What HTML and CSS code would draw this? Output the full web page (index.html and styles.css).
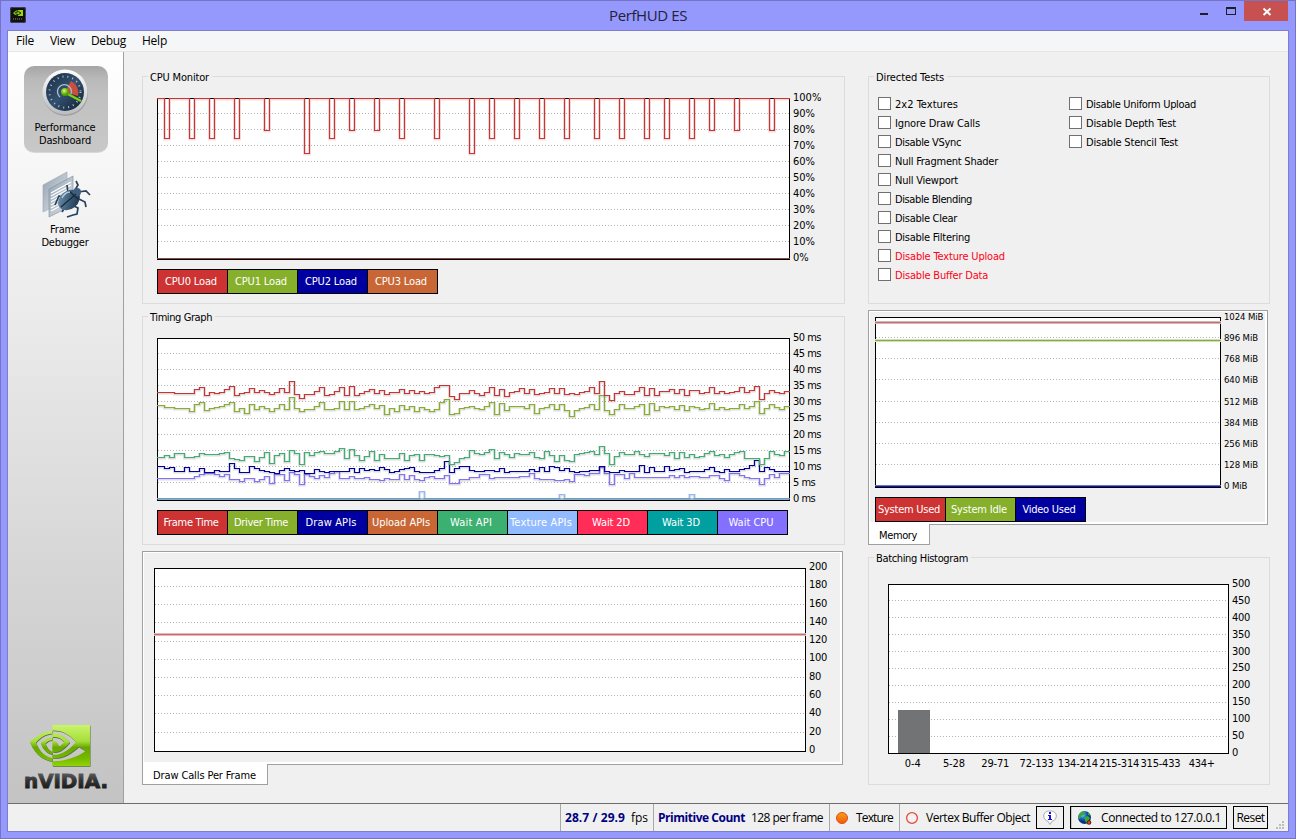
FILE: index.html
```html
<!DOCTYPE html>
<html lang="en">
<head>
<meta charset="utf-8">
<title>PerfHUD ES</title>
<link rel="stylesheet" href="styles.css">
</head>
<body>
<div class="window">
  <header class="titlebar">
    <svg class="app-icon" width="16" height="16" viewBox="0 0 16 16"><rect width="16" height="16" rx="2" fill="#111"/><rect x=".5" y=".5" width="15" height="15" rx="2" fill="none" stroke="#444"/><path d="M3 6q4-4 5-2v4q-3 1-5-2z" fill="#79b50d"/><path d="M8 3h5v6H8z" fill="#9bd11c"/><path d="M5 6q3-3 6 0-3 3-5 1" fill="none" stroke="#173400"/><path d="M3 12h10" stroke="#888" stroke-dasharray="1 1"/></svg>
    <h1 class="title" data-w="78">PerfHUD ES</h1>
    <div class="controls">
      <svg width="88" height="20" viewBox="0 1 88 20"><path d="M0 13h8v2H0z" fill="#1e1e28"/><path d="M26 7h10v8H26zM27 9v5h8V9z" fill="#1e1e28" fill-rule="evenodd"/><path d="M44 1h44v20H44z" fill="#c75050"/><path d="M63.500 8.500l7 6.500m0-6.500l-7 6.500" stroke="#fff" stroke-width="1.900"/></svg>
    </div>
  </header>
  <div class="client">
    <nav class="menu"><span data-w="18">File</span><span data-w="25">View</span><span data-w="35">Debug</span><span data-w="25">Help</span></nav>
    <div class="middle">
      <aside class="sidebar">
        <div class="tile tile-active">
          <svg class="tile-icon" width="50" height="50" viewBox="0 0 50 50">
            <defs>
              <linearGradient id="rim" x2="0" y2="1"><stop stop-color="#fff"/><stop offset="1" stop-color="#b9bcc0"/></linearGradient>
              <linearGradient id="dial" x2="1" y2="1"><stop stop-color="#1b2c42"/><stop offset=".5" stop-color="#33506f"/><stop offset="1" stop-color="#101e30"/></linearGradient>
              <radialGradient id="hub" cx=".4" cy=".35"><stop stop-color="#d7ff70"/><stop offset="1" stop-color="#4fa000"/></radialGradient>
            </defs>
            <circle cx="25.500" cy="26.500" r="22.500" fill="#777" opacity=".45"/>
            <circle cx="25" cy="25" r="22.500" fill="url(#rim)"/>
            <circle cx="25" cy="25" r="19" fill="url(#dial)"/>
            <path d="M25 25L31 14a13 13 0 0 1 7 15z" fill="#c9503e"/>
            <circle cx="25" cy="25" r="15.500" fill="none" stroke="#dbe4ee" stroke-width="2" stroke-dasharray="1 4" opacity=".8"/>
            <path d="M20 30a7 7 0 1 1 11-3" fill="none" stroke="#aebccd" stroke-width="1.300"/>
            <path d="M24 25L41 34" stroke="#77d60c" stroke-width="2.400"/>
            <circle cx="25" cy="25" r="4" fill="url(#hub)"/>
          </svg>
          <span data-w="61">Performance</span><span data-w="52">Dashboard</span>
        </div>
        <div class="tile">
          <svg class="tile-icon" width="50" height="50" viewBox="0 0 50 50">
            <defs><linearGradient id="page" x2="1" y2="1"><stop stop-color="#8fa0b0"/><stop offset="1" stop-color="#e5e9ed"/></linearGradient>
            <linearGradient id="bug" x2="1" y2="1"><stop stop-color="#7899b6"/><stop offset=".6" stop-color="#35536f"/><stop offset="1" stop-color="#182b40"/></linearGradient></defs>
            <path d="M2 14L26 1v28L2 41z" fill="url(#page)" stroke="#9aa5af" stroke-width=".6"/>
            <path d="M8 18L32 5v29L8 46z" fill="url(#page)" stroke="#7d8c9a" stroke-width=".6"/>
            <path d="M10 22l20-11M10 25l20-11M10 28l18-10M10 31l16-9M10 34l15-8M10 37l13-7M10 40l13-7" stroke="#fff" stroke-width="1.300"/>
            <path d="M23 27l-5-2-4 9M27 22l-1-8M34 19l3-5-2-4M37 21l8-1 4 4M38 28l6 3 1 5M33 35l4 2-1 6-4 1-6 2M24 36l-3 5" fill="none" stroke="#29415a" stroke-width="1.700"/>
            <ellipse cx="28" cy="29" rx="12" ry="9" transform="rotate(-40 28 29)" fill="url(#bug)"/>
            <circle cx="36" cy="21" r="4" fill="#3f5f7d"/>
            <path d="M20 36L35 23M28 20l9 8" stroke="#14273a" stroke-width="1.100"/>
            <path d="M21 27q3-6 8-6" fill="none" stroke="#b5cadd" stroke-width="1.300"/>
          </svg>
          <span data-w="30">Frame</span><span data-w="47">Debugger</span>
        </div>
        <svg class="brand" width="90" height="70" viewBox="0 0 90 70">
          <defs>
            <linearGradient id="eye" x2="0" y2="1"><stop stop-color="#c9f56b"/><stop offset=".4" stop-color="#a6dd3a"/><stop offset=".55" stop-color="#67a800"/><stop offset=".8" stop-color="#74b800"/><stop offset="1" stop-color="#8fd400"/></linearGradient>
            <linearGradient id="word" x2="0" y2="1"><stop stop-color="#777"/><stop offset=".5" stop-color="#333"/><stop offset="1" stop-color="#111"/></linearGradient>
          </defs>
          <g transform="translate(7 -7.500) scale(2.500 2.580)">
            <path transform="translate(.2 .3)" fill="#31530a" opacity=".75" d="M8.948 8.798v-1.430a6.700 6.700 0 0 1 .424-.018c3.922-.124 6.493 3.374 6.493 3.374s-2.774 3.851-5.750 3.851c-.398 0-.787-.062-1.158-.185v-4.346c1.528.185 1.837.857 2.747 2.385l2.040-1.714s-1.492-1.952-4-1.952a6.016 6.016 0 0 0-.796.035m0-4.735v2.138l.424-.027c5.450-.185 9.010 4.470 9.010 4.470s-4.080 4.964-8.330 4.964c-.370 0-.733-.035-1.095-.097v1.325c.3.035.610.062.910.062 3.957 0 6.820-2.023 9.593-4.408.459.371 2.340 1.263 2.730 1.652-2.633 2.208-8.772 3.984-12.253 3.984-.335 0-.653-.018-.971-.053v1.864H24V4.063zm0 10.326v1.131c-3.657-.654-4.673-4.460-4.673-4.460s1.758-1.944 4.673-2.262v1.237H8.940c-1.528-.186-2.730 1.245-2.730 1.245s.680 2.412 2.739 3.110M2.456 10.900s2.164-3.197 6.500-3.533V6.201C4.153 6.590 0 10.653 0 10.653s2.350 6.802 8.948 7.420v-1.237c-4.840-.6-6.492-5.936-6.492-5.936z"/>
            <path fill="url(#eye)" d="M8.948 8.798v-1.430a6.700 6.700 0 0 1 .424-.018c3.922-.124 6.493 3.374 6.493 3.374s-2.774 3.851-5.750 3.851c-.398 0-.787-.062-1.158-.185v-4.346c1.528.185 1.837.857 2.747 2.385l2.040-1.714s-1.492-1.952-4-1.952a6.016 6.016 0 0 0-.796.035m0-4.735v2.138l.424-.027c5.450-.185 9.010 4.470 9.010 4.470s-4.080 4.964-8.330 4.964c-.370 0-.733-.035-1.095-.097v1.325c.3.035.610.062.910.062 3.957 0 6.820-2.023 9.593-4.408.459.371 2.340 1.263 2.730 1.652-2.633 2.208-8.772 3.984-12.253 3.984-.335 0-.653-.018-.971-.053v1.864H24V4.063zm0 10.326v1.131c-3.657-.654-4.673-4.460-4.673-4.460s1.758-1.944 4.673-2.262v1.237H8.940c-1.528-.186-2.730 1.245-2.730 1.245s.680 2.412 2.739 3.110M2.456 10.900s2.164-3.197 6.500-3.533V6.201C4.153 6.590 0 10.653 0 10.653s2.350 6.802 8.948 7.420v-1.237c-4.840-.6-6.492-5.936-6.492-5.936z"/>
          </g>
          <text class="wordmark" x="1" y="65.500" textLength="84" lengthAdjust="spacingAndGlyphs" fill="url(#word)">nVIDIA.</text>
        </svg>
      </aside>
      <main class="content">
        <section class="column">
          <div class="group cpu">
            <h2 class="group-title" data-w="59">CPU Monitor</h2>
            <div class="chart"><svg class="plot" id="cpu" width="633" height="162"></svg><div class="axis" data-labels="100%,90%,80%,70%,60%,50%,40%,30%,20%,10%,0%"></div></div>
            <div class="legend"><b class="key red"><span data-w="52">CPU0 Load</span></b><b class="key green"><span data-w="52">CPU1 Load</span></b><b class="key navy"><span data-w="52">CPU2 Load</span></b><b class="key orange"><span data-w="52">CPU3 Load</span></b></div>
          </div>
          <div class="group timing">
            <h2 class="group-title" data-w="62">Timing Graph</h2>
            <div class="chart"><svg class="plot" id="timing" width="633" height="163"></svg><div class="axis" data-labels="50 ms,45 ms,40 ms,35 ms,30 ms,25 ms,20 ms,15 ms,10 ms,5 ms,0 ms"></div></div>
            <div class="legend"><b class="key red"><span data-w="55">Frame Time</span></b><b class="key green"><span data-w="54">Driver Time</span></b><b class="key navy"><span data-w="51">Draw APIs</span></b><b class="key orange"><span data-w="58">Upload APIs</span></b><b class="key jade"><span data-w="42">Wait API</span></b><b class="key sky"><span data-w="62">Texture APIs</span></b><b class="key crimson"><span data-w="38">Wait 2D</span></b><b class="key teal"><span data-w="38">Wait 3D</span></b><b class="key violet"><span data-w="45">Wait CPU</span></b></div>
          </div>
          <div class="panel calls">
            <div class="chart"><svg class="plot" id="calls" width="652" height="184"></svg><div class="axis" data-labels="200,180,160,140,120,100,80,60,40,20,0"></div></div>
          </div>
          <div class="tab calls-tab"><span data-w="103">Draw Calls Per Frame</span></div>
        </section>
        <section class="column">
          <div class="group tests">
            <h2 class="group-title" data-w="68">Directed Tests</h2>
            <div class="checks">
              <label><i></i><span data-w="63">2x2 Textures</span></label>
              <label><i></i><span data-w="85">Ignore Draw Calls</span></label>
              <label><i></i><span data-w="66">Disable VSync</span></label>
              <label><i></i><span data-w="103">Null Fragment Shader</span></label>
              <label><i></i><span data-w="63">Null Viewport</span></label>
              <label><i></i><span data-w="77">Disable Blending</span></label>
              <label><i></i><span data-w="62">Disable Clear</span></label>
              <label><i></i><span data-w="75">Disable Filtering</span></label>
              <label class="warn"><i></i><span data-w="110">Disable Texture Upload</span></label>
              <label class="warn"><i></i><span data-w="93">Disable Buffer Data</span></label>
            </div>
            <div class="checks">
              <label><i></i><span data-w="110">Disable Uniform Upload</span></label>
              <label><i></i><span data-w="90">Disable Depth Test</span></label>
              <label><i></i><span data-w="92">Disable Stencil Test</span></label>
            </div>
          </div>
          <div class="panel memory">
            <div class="chart"><svg class="plot" id="memory" width="346" height="171"></svg><div class="axis" data-labels="1024 MiB,896 MiB,768 MiB,640 MiB,512 MiB,384 MiB,256 MiB,128 MiB,0 MiB"></div></div>
            <div class="legend"><b class="key red"><span data-w="62">System Used</span></b><b class="key green"><span data-w="56">System Idle</span></b><b class="key navy"><span data-w="53">Video Used</span></b></div>
          </div>
          <div class="tab memory-tab"><span data-w="38">Memory</span></div>
          <div class="group histogram">
            <h2 class="group-title" data-w="92">Batching Histogram</h2>
            <div class="chart"><svg class="plot" id="histogram" width="341" height="170"></svg><div class="axis" data-labels="500,450,400,350,300,250,200,150,100,50,0"></div></div>
            <div class="buckets"><span data-w="16">0-4</span><span data-w="22">5-28</span><span data-w="28">29-71</span><span data-w="34">72-133</span><span data-w="40">134-214</span><span data-w="40">215-314</span><span data-w="40">315-433</span><span data-w="26">434+</span></div>
          </div>
        </section>
      </main>
    </div>
    <footer class="status">
      <div class="cell fps"><strong data-w="60">28.7 / 29.9</strong><span data-w="17">fps</span></div>
      <div class="cell prims"><strong data-w="87">Primitive Count</strong><span data-w="72">128 per frame</span></div>
      <div class="cell texture"><svg width="14" height="14"><defs><linearGradient id="dot" x2="0" y2="1"><stop stop-color="#f8a010"/><stop offset="1" stop-color="#f05a10"/></linearGradient></defs><circle cx="7" cy="7" r="5.500" fill="url(#dot)" stroke="#e24a1c"/></svg><span data-w="37">Texture</span></div>
      <div class="cell vbo"><svg width="14" height="14"><circle cx="7" cy="7" r="5.400" fill="#f4f2f2" stroke="#e5483a" stroke-width="1.300"/></svg><span data-w="104">Vertex Buffer Object</span></div>
      <div class="button info"><svg width="16" height="16" viewBox="0 0 16 16"><path d="M8 1c4.300 0 6.300 2.200 6.300 5s-2 4.700-4.300 5.300L8 14.500l-2-3.200C3.700 10.700 1.700 8.800 1.700 6S3.700 1 8 1z" fill="#fff" stroke="#aaa"/><path d="M7 2h2v2H7zM6 5h3v4h1v1H6V9h1V6H6z" fill="#1414e0"/></svg></div>
      <div class="divider"></div>
      <div class="button connection"><svg width="16" height="16" viewBox="0 0 16 16"><defs><radialGradient id="globe" cx=".35" cy=".3"><stop stop-color="#8fd4ff"/><stop offset=".5" stop-color="#2070d0"/><stop offset="1" stop-color="#0a2f80"/></radialGradient></defs><circle cx="7.500" cy="7.500" r="6.500" fill="url(#globe)"/><path d="M3 3q3-3 6-1l-2 3-3 1-1 3-2-1zM7 7l4-1 2 2-3 5-2-2zM11 2l3 4-3-1z" fill="#38a838"/><circle cx="12" cy="12.500" r="2.300" fill="#602010"/><circle cx="12" cy="12.500" r="1.200" fill="#f04020"/></svg><span data-w="120">Connected to 127.0.0.1</span></div>
      <div class="button reset"><span data-w="28">Reset</span></div>
      <svg class="grip" width="9" height="9"><path d="M6 0h2v2H6zM3 3h2v2H3zM6 3h2v2H6zM0 6h2v2H0zM3 6h2v2H3zM6 6h2v2H6z" fill="#bdbdbd"/></svg>
    </footer>
  </div>
</div>
<script src="app.js"></script>
</body>
</html>
```
FILE: styles.css
```css
* { box-sizing: border-box; }
body { margin: 0; width: 1296px; height: 839px; overflow: hidden; font: 11px/12px "DejaVu Sans Condensed", "DejaVu Sans", sans-serif; color: #000; }
h1, h2 { margin: 0; font-weight: normal; }
span, strong, h1, h2 { white-space: nowrap; }
svg { display: block; flex: none; }
.window { width: 1296px; height: 839px; background: #9598fc; border: 1px solid #7474c2; padding: 0 6px 6px; display: flex; flex-direction: column; }
.titlebar { height: 29px; flex: none; display: grid; grid-template-columns: 1fr auto 1fr; align-items: start; }
.app-icon { margin: 6px 0 0 3px; }
.title { font: 15px/20px "Open Sans", "Noto Sans", sans-serif; color: #22223a; margin-top: 4px; }
.controls { justify-self: end; margin-right: 1px; }
.client { flex: 1; border: 1px solid #7f7fc9; background: #f0f0f0; display: flex; flex-direction: column; min-height: 0; }
.menu { height: 21px; flex: none; display: flex; gap: 16px; padding-left: 8px; background: #f5f6f7; border-bottom: 1px solid #e4e6e8; font: 12px/20px "Open Sans", "Noto Sans", sans-serif; }
.middle { flex: 1; display: flex; min-height: 0; }
.sidebar { width: 116px; flex: none; border-right: 1px solid #a0a0a0; background: linear-gradient(#fff, #f1f1f1 25%, #c3c3c3); display: flex; flex-direction: column; align-items: center; padding: 14px 1px 11px 1px; }
.tile { width: 84px; height: 87px; display: flex; flex-direction: column; align-items: center; margin-bottom: 15px; line-height: 13px; }
.tile + .tile { padding-top: 3px; }
.tile-active { border-radius: 10px; background: linear-gradient(#a6a6a6, #b9b9b9 15%, #c1c1c1 35%, #c8c8c8); border-bottom: 1px solid #d8d8d8; }
.tile-icon { margin: 1px 2px 4px 0; }
.tile span { margin-right: 1px; }
.tile + .tile .tile-icon { margin: 0 0 2px; }
.brand { margin: auto 0 0 4px; }
.wordmark { font: bold 20px "DejaVu Sans", sans-serif; stroke: url(#word); stroke-width: 1px; }
.content { display: flex; gap: 23px; padding: 24px 0 0 18px; }
.column:first-child { width: 703px; }
.column:last-child { width: 402px; }
.group { position: relative; border: 1px solid #dcdcdc; }
.group-title { position: absolute; left: 5px; top: -7px; height: 14px; padding: 0 3px 0 2px; font-size: 11px; line-height: 16px; background: #f0f0f0; }
.chart { display: flex; }
.axis { margin-left: 3px; display: flex; flex-direction: column; justify-content: space-between; letter-spacing: -.3px; white-space: nowrap; }
.axis span { height: 12px; line-height: 14px; }
.cpu { height: 228px; padding: 14px 0 0 14px; }
.cpu .chart { height: 172px; }
.cpu .axis { letter-spacing: 0; }
.cpu .plot, .timing .plot { margin-top: 7px; }
.timing { height: 229px; margin-top: 12px; padding: 14px 0 0 14px; }
.timing .chart { height: 173px; }
.timing .axis { letter-spacing: -.5px; }
.legend { display: flex; margin-top: 6px; }
.key { width: 71px; height: 25px; border: 1px solid #000; display: flex; justify-content: center; align-items: center; color: #fff; font-weight: normal; padding-right: 3px; }
.key + .key { margin-left: -1px; }
.red { background: #cd3333; }
.green { background: #86b02b; }
.navy { background: #0000a0; }
.orange { background: #c86735; }
.jade { background: #3cb070; }
.sky { background: #92baff; }
.crimson { background: #ff2d58; }
.teal { background: #00a0a0; }
.violet { background: #8470ff; }
.panel { border: 1px solid #a0a0a0; box-shadow: inset 1px 1px #fff, inset -2px -2px #fff; }
.calls { width: 701px; height: 214px; margin-top: 6px; padding: 8px 0 0 11px; }
.calls .chart { height: 195px; }
.calls .plot { margin-top: 8px; }
.tab { position: relative; height: 21px; margin-top: -1px; background: #fff; border: 1px solid #a0a0a0; border-top: 0; padding: 6px 0 0 10px; }
.calls-tab { width: 126px; }
.memory-tab { width: 62px; }
.tests { height: 228px; padding: 17px 0 0 9px; display: flex; }
.checks { width: 191px; }
.checks label { display: flex; align-items: center; height: 19px; }
.checks i { width: 13px; height: 13px; border: 1px solid #707070; background: #fff; margin-right: 4px; }
.checks span { padding-top: 2px; }
.warn { color: #ff0014; }
.memory { width: 400px; height: 215px; margin-top: 6px; padding: 0 0 0 6px; }
.memory .chart { height: 181px; }
.memory .plot { margin-top: 6px; }
.memory .axis { font-size: 9.500px; letter-spacing: -.1px; }
.memory .axis span { line-height: 12px; }
.memory .legend { margin-top: 5px; }
.histogram { height: 228px; margin-top: 12px; padding: 19px 0 0 19px; }
.histogram .chart { height: 181px; }
.histogram .plot { margin-top: 7px; }
.buckets { display: grid; grid-template-columns: repeat(8, 41.300px); justify-items: center; margin: 0 0 0 4px; }
.status { height: 28px; flex: none; border-top: 1px solid #6d6d6d; display: flex; justify-content: flex-end; font: 12px/16px "Open Sans", "Noto Sans", sans-serif; }
.status strong { color: #000080; }
.cell { border-left: 1px solid #a8a8a8; display: flex; align-items: center; }
.fps { width: 93px; padding-left: 4px; gap: 6px; }
.prims { width: 176px; padding-left: 4px; gap: 6px; }
.texture { width: 70px; padding-left: 5px; gap: 7px; }
.vbo { width: 137px; padding-left: 5px; gap: 7px; }
.button { height: 23px; margin-top: 2px; border: 1px solid #000; display: flex; align-items: center; }
.info { width: 28px; justify-content: center; }
.divider { width: 6px; }
.connection { width: 157px; padding-left: 6px; gap: 8px; background: linear-gradient(90deg, #c8c8c8 1px, transparent 1px); }
.reset { width: 35px; margin-left: 6px; justify-content: center; }
.grip { margin: 17px 3px 0 8px; }
```
FILE: app.js
```js
const NS = 'http://www.w3.org/2000/svg';

function add(svg, tag, attrs) {
  const el = document.createElementNS(NS, tag);
  for (const k in attrs) el.setAttribute(k, attrs[k]);
  svg.appendChild(el);
}

// White plot area with dotted horizontal rules at the given rows.
function base(id, rows) {
  const svg = document.getElementById(id);
  const w = +svg.getAttribute('width'), h = +svg.getAttribute('height');
  add(svg, 'rect', { x: .5, y: .5, width: w - 1, height: h - 1, fill: '#fff', stroke: '#000' });
  for (const r of rows) {
    add(svg, 'path', { d: `M1 ${r + .5}H${w - 1}`, stroke: '#b4b4b4', 'stroke-dasharray': '1 2', 'shape-rendering': 'crispEdges' });
  }
  return svg;
}

// Step line with a soft shadow under it.
function steps(svg, points, color, shadow = '#555') {
  const w = +svg.getAttribute('width');
  let d = `M0 ${points[0][1]}`;
  for (const [x, y] of points.slice(1)) d += `H${x}V${y}`;
  d += `H${w}`;
  add(svg, 'path', { d, fill: 'none', stroke: shadow, 'stroke-opacity': .2, 'stroke-width': 2.6, transform: 'translate(0 .7)' });
  add(svg, 'path', { d, fill: 'none', stroke: color, 'stroke-width': 1.15 });
}

// Series are stored as "x:y" at a third of a pixel, in two halves 1050 units apart.
function decode(first, second) {
  const read = (s, off) => s.trim().split(/\s+/).map(p => {
    const [x, y] = p.split(':').map(Number);
    return [Math.floor((x + off) / 3) - 17 + .5, Math.floor(y / 3) - 33 + .5];
  });
  return read(first, 0).concat(read(second, 1050));
}

const every = (start, step, n) => Array.from({ length: n }, (_, i) => Math.round(start + i * step));

// CPU load
const cpu = base('cpu', every(15, 16, 9));
const dips = { 1: 40, 6: 40, 10: 40, 15: 40, 21: 32, 29: 55, 34: 40, 38: 32, 43: 32, 48: 40, 55: 40, 62: 55, 66: 40,
  71: 40, 76: 40, 81: 40, 87: 40, 92: 40, 97: 40, 101: 40, 106: 40, 110: 32, 115: 32, 122: 32 };
const load = [[0, .5]];
for (const k in dips) load.push([2.5 + 5 * k, dips[k] + .5], [7.5 + 5 * k, .5]);
steps(cpu, load, '#cd3333', '#c06060');
add(cpu, 'path', { d: 'M0 160.500H633', stroke: '#8c4a4a' });

// Frame timing
const timing = base('timing', [15, 31, 47, 63, 80, 96, 112, 128, 144]);
const series = [
  ['#92baff', '52:581 838:560 853:581', '208:569 223:581 598:569 613:581'],
  ['#8470ff', '52:521 103:519 163:514 178:508 193:505 223:509 238:515 253:509 268:522 283:524 298:528 313:519 343:528 358:523 373:514 388:536 403:508 433:525 448:502 463:508 478:538 493:508 508:513 523:520 538:510 553:517 568:506 583:500 598:520 628:513 643:520 673:516 688:523 718:525 733:520 748:522 778:508 793:523 808:512 823:522 838:527 853:516 868:514 883:521 913:512 928:535 958:522 988:517 1018:508 1048:519', '13:518 88:514 118:506 133:519 148:523 193:526 223:522 238:529 253:508 283:512 298:506 328:488 343:505 358:538 373:507 403:519 418:506 433:517 538:512 553:517 568:512 583:518 598:513 628:516 658:512 688:520 703:526 718:505 748:511 763:516 778:519 808:538 823:520 838:508 853:516 868:504 883:505'],
  ['#0000a0', '52:485 73:490 88:486 103:499 133:487 148:500 178:491 193:501 223:497 238:500 253:498 268:476 283:491 298:501 328:485 343:490 358:496 373:499 388:502 403:505 418:496 433:489 448:495 463:500 478:495 493:505 523:493 538:499 553:502 568:500 628:491 643:502 658:491 673:496 688:492 703:497 718:488 733:494 748:503 763:499 778:494 793:490 808:487 823:499 838:503 883:497 898:490 913:469 928:501 943:491 958:485 988:497 1003:499 1033:497', '13:500 28:490 43:502 58:498 88:500 118:492 133:500 148:488 163:500 178:484 193:488 208:497 223:489 238:499 253:503 268:500 298:496 328:485 343:499 358:502 388:497 403:499 448:481 463:501 478:487 493:500 523:484 538:497 553:494 568:490 583:502 598:500 613:498 643:493 658:487 673:500 688:503 703:493 718:500 748:493 763:490 778:482 793:466 808:499 823:487 838:493 853:498 883:500'],
  ['#3cb070', '52:457 73:452 88:458 103:446 133:458 163:453 178:446 193:449 238:445 253:442 268:459 283:463 298:466 313:455 343:468 358:458 373:443 388:476 403:450 418:445 433:468 448:436 463:444 478:478 493:443 508:450 523:443 538:439 553:446 568:444 583:440 598:431 613:459 628:434 643:452 658:465 673:455 688:440 703:465 718:447 733:460 778:444 793:467 808:452 823:447 838:467 853:447 883:452 898:455 913:452 928:477 943:471 958:461 973:457 988:437 1003:446 1018:449 1033:441 1048:433', '13:460 28:441 43:448 58:456 73:445 88:448 118:443 133:457 148:461 163:439 178:452 193:468 208:452 223:465 238:469 253:448 268:445 283:441 298:438 313:449 328:424 343:445 358:478 373:454 388:441 403:447 433:440 448:449 463:455 478:445 523:452 538:442 553:459 568:443 583:456 598:447 613:458 628:453 643:446 658:438 673:452 688:447 703:457 718:449 733:443 748:438 763:460 808:478 823:461 838:440 853:448 868:450 883:440'],
  ['#86b02b', '52:302 73:306 103:309 148:319 163:299 178:293 193:316 208:310 223:308 238:303 253:297 268:293 283:318 298:310 313:325 328:299 343:312 358:305 373:309 388:318 403:311 418:299 433:312 448:278 463:311 478:319 493:312 523:304 538:292 553:314 583:309 598:290 613:314 628:290 643:314 658:311 673:303 688:298 703:311 718:302 733:327 748:309 763:318 778:302 793:313 808:303 823:318 838:308 853:313 868:319 883:313 898:293 913:284 928:329 943:324 958:309 973:306 988:303 1003:309 1018:312 1033:304 1048:292', '13:327 28:295 43:316 58:303 103:309 118:299 133:326 148:311 163:306 178:298 193:314 208:298 223:316 238:333 253:315 268:311 283:307 298:297 313:314 328:272 343:316 358:328 373:312 388:298 403:310 433:304 448:297 463:327 478:295 493:315 508:303 523:308 538:303 553:312 568:302 583:317 598:303 613:306 628:314 643:309 658:294 673:313 688:306 703:314 718:310 748:297 763:311 778:305 793:289 808:325 823:310 838:298 853:307 868:312 883:304'],
  ['#cd3333', '52:261 103:265 163:252 178:247 193:272 208:263 223:265 238:261 253:252 268:245 283:271 298:265 313:261 328:251 343:263 358:256 373:261 388:267 403:263 418:249 433:263 448:230 463:269 478:279 493:268 523:258 538:246 553:271 568:269 583:259 598:247 613:271 628:245 643:271 658:266 673:259 688:254 703:266 718:256 733:269 748:261 778:252 793:264 808:256 823:266 838:260 853:266 868:262 883:248 898:241 928:275 943:283 958:266 988:255 1003:264 1018:271 1033:262 1048:247', '13:272 28:253 43:273 58:261 73:258 88:251 103:264 118:253 133:269 148:265 163:261 178:250 193:265 208:251 223:269 238:265 253:267 268:262 283:260 298:246 313:266 328:230 343:270 358:286 373:266 388:258 403:269 433:259 448:246 463:272 478:250 493:271 508:259 538:253 553:266 568:253 583:271 598:256 628:265 643:262 658:247 673:266 688:259 703:264 718:261 733:258 748:247 763:261 778:256 793:245 808:284 823:265 838:256 853:263 868:266 883:258'],
];
for (const [color, a, b] of series) steps(timing, decode(a, b), color);
add(timing, 'path', { d: 'M0 161H633', stroke: '#4080a0', 'stroke-width': 1 });
add(timing, 'path', { d: 'M0 162.500H633', stroke: '#000' });

// Flat lines: a coloured row between two paler ones.
function flat(svg, y, color, edge) {
  const w = svg.getAttribute('width');
  add(svg, 'path', { d: `M0 ${y + .5}H${w}`, stroke: edge, 'stroke-width': 3 });
  add(svg, 'path', { d: `M0 ${y + .5}H${w}`, stroke: color });
}

flat(base('calls', every(18, 18.2, 9)), 66, '#dc6464', '#d8bcbc');

const memory = base('memory', [20, 41, 62, 84, 105, 126, 147]);
flat(memory, 5, '#e06464', '#c8bcbc');
flat(memory, 23, '#86b02b', '#d2dcc0');
add(memory, 'path', { d: 'M0 168.500H346', stroke: '#7474bc' });
add(memory, 'path', { d: 'M0 169.500H346', stroke: '#1414a0' });

const histogram = base('histogram', every(16, 17, 9));
add(histogram, 'rect', { x: 10, y: 126, width: 32, height: 43, fill: '#717375' });

for (const axis of document.querySelectorAll('.axis')) {
  for (const label of axis.dataset.labels.split(',')) {
    const s = document.createElement('span');
    s.textContent = label;
    axis.appendChild(s);
  }
}

// Track each caption so it takes its nominal width.
for (const el of document.querySelectorAll('[data-w]')) {
  const range = document.createRange();
  range.selectNodeContents(el);
  const n = el.textContent.length;
  const extra = (el.dataset.w - range.getBoundingClientRect().width) / n;
  el.style.letterSpacing = extra.toFixed(3) + 'px';
}
```
